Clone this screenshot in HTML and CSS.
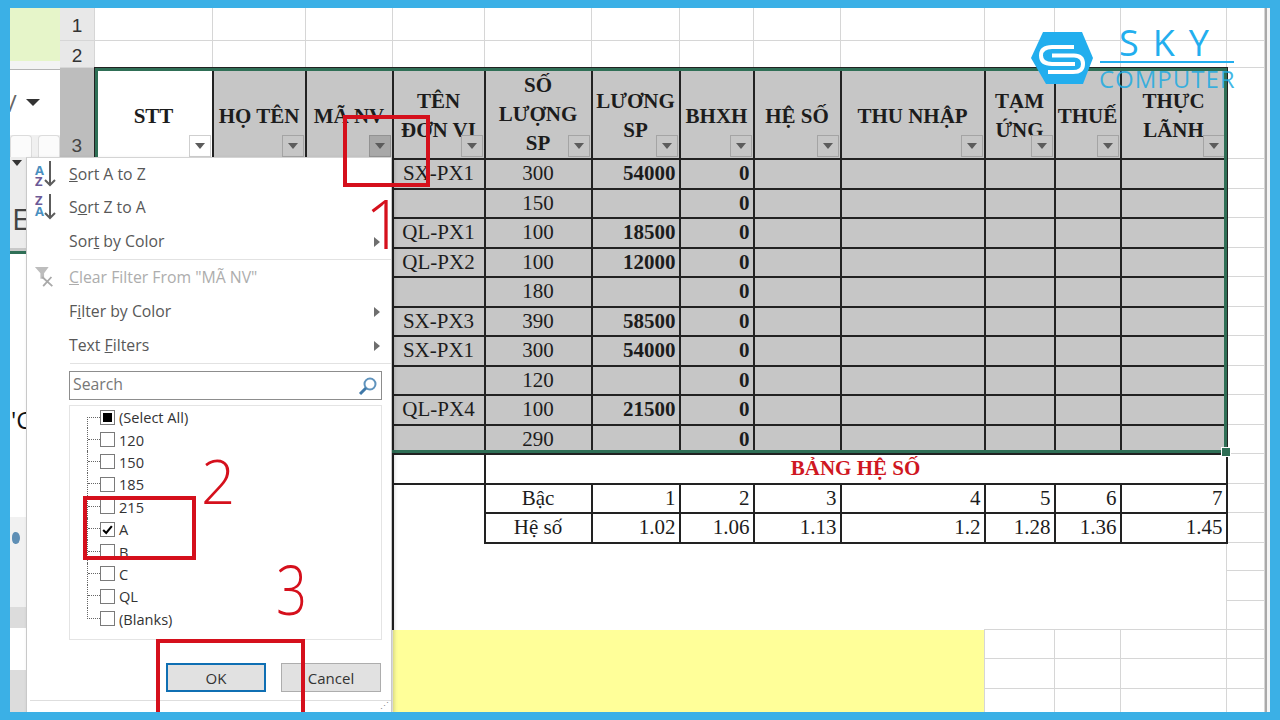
FILE: index.html
```html
<!DOCTYPE html>
<html>
	<head>
		<meta charset="UTF-8"/>
		<title>Lọc dữ liệu trong Excel</title>
		<link rel="stylesheet" href="styles.css">
	</head>
	<body>
		<div class="window">
			<div class="side">
				<div class="side-green"></div>
				<div class="side-gap"></div>
				<div class="side-tool"><span class="slash">/</span><span class="tri"></span></div>
				<div class="side-btns"><span class="side-btn"></span><span class="side-btn"></span></div>
				<div class="side-sub"><span class="tri tri-small"></span><span class="side-e">E</span></div>
				<div class="side-line"></div>
				<div class="side-white"><span class="side-c">'C</span></div>
				<div class="side-light"><span class="side-eye"></span></div>
				<div class="side-gray side-gray-a"></div>
				<div class="side-blank"></div>
				<div class="side-gray side-gray-b"></div>
			</div>

			<div class="sheet">
				<table class="grid">
					<colgroup>
						<col class="w35"><col class="w118"><col class="w93"><col class="w87"><col class="w92"><col class="w107"><col class="w88"><col class="w74"><col class="w87"><col class="w144"><col class="w70"><col class="w66"><col class="w106"><col class="w38">
					</colgroup>
					<tr class="r33"><td class="rowhead">1</td><td></td><td></td><td></td><td></td><td></td><td></td><td></td><td></td><td></td><td></td><td></td><td></td><td></td></tr>
					<tr class="r27"><td class="rowhead">2</td><td></td><td></td><td></td><td></td><td></td><td></td><td></td><td></td><td></td><td></td><td></td><td></td><td></td></tr>
					<tr class="r89">
						<td class="rowhead rowhead-on">3</td>
						<td class="th th-white">STT<span class="fbtn fbtn-white"><i></i></span></td>
						<td class="th">HỌ TÊN<span class="fbtn"><i></i></span></td>
						<td class="th">MÃ NV<span class="fbtn fbtn-on"><i></i></span></td>
						<td class="th">TÊN<br>ĐƠN VỊ<span class="fbtn"><i></i></span></td>
						<td class="th th-tall">SỐ<br>LƯỢNG<br>SP<span class="fbtn"><i></i></span></td>
						<td class="th">LƯƠNG<br>SP<span class="fbtn"><i></i></span></td>
						<td class="th">BHXH<span class="fbtn"><i></i></span></td>
						<td class="th">HỆ SỐ<span class="fbtn"><i></i></span></td>
						<td class="th">THU NHẬP<span class="fbtn"><i></i></span></td>
						<td class="th">TẠM<br>ỨNG<span class="fbtn"><i></i></span></td>
						<td class="th">THUẾ<span class="fbtn"><i></i></span></td>
						<td class="th">THỰC<br>LÃNH<span class="fbtn"><i></i></span></td>
						<td></td>
					</tr>
					<tr class="r30 data"><td class="rowhead"></td><td colspan="3"></td><td>SX-PX1</td><td>300</td><td class="num b">54000</td><td class="num b">0</td><td></td><td></td><td></td><td></td><td></td><td class="out"></td></tr>
					<tr class="r29 data"><td class="rowhead"></td><td colspan="3"></td><td></td><td>150</td><td></td><td class="num b">0</td><td></td><td></td><td></td><td></td><td></td><td class="out"></td></tr>
					<tr class="r30 data"><td class="rowhead"></td><td colspan="3"></td><td>QL-PX1</td><td>100</td><td class="num b">18500</td><td class="num b">0</td><td></td><td></td><td></td><td></td><td></td><td class="out"></td></tr>
					<tr class="r29 data"><td class="rowhead"></td><td colspan="3"></td><td>QL-PX2</td><td>100</td><td class="num b">12000</td><td class="num b">0</td><td></td><td></td><td></td><td></td><td></td><td class="out"></td></tr>
					<tr class="r30 data"><td class="rowhead"></td><td colspan="3"></td><td></td><td>180</td><td></td><td class="num b">0</td><td></td><td></td><td></td><td></td><td></td><td class="out"></td></tr>
					<tr class="r29 data"><td class="rowhead"></td><td colspan="3"></td><td>SX-PX3</td><td>390</td><td class="num b">58500</td><td class="num b">0</td><td></td><td></td><td></td><td></td><td></td><td class="out"></td></tr>
					<tr class="r30 data"><td class="rowhead"></td><td colspan="3"></td><td>SX-PX1</td><td>300</td><td class="num b">54000</td><td class="num b">0</td><td></td><td></td><td></td><td></td><td></td><td class="out"></td></tr>
					<tr class="r29 data"><td class="rowhead"></td><td colspan="3"></td><td></td><td>120</td><td></td><td class="num b">0</td><td></td><td></td><td></td><td></td><td></td><td class="out"></td></tr>
					<tr class="r30 data"><td class="rowhead"></td><td colspan="3"></td><td>QL-PX4</td><td>100</td><td class="num b">21500</td><td class="num b">0</td><td></td><td></td><td></td><td></td><td></td><td class="out"></td></tr>
					<tr class="r29 data"><td class="rowhead"></td><td colspan="3"></td><td></td><td>290</td><td></td><td class="num b">0</td><td></td><td></td><td></td><td></td><td></td><td class="out"></td></tr>
					<tr class="r30 plain"><td class="rowhead"></td><td colspan="3" class="none"></td><td class="black"></td><td colspan="8" class="black title">BẢNG HỆ SỐ</td><td class="out"></td></tr>
					<tr class="r29 plain"><td class="rowhead"></td><td colspan="3" class="none"></td><td class="leftline"></td><td class="black">Bậc</td><td class="black num">1</td><td class="black num">2</td><td class="black num">3</td><td class="black num">4</td><td class="black num">5</td><td class="black num">6</td><td class="black num">7</td><td class="out"></td></tr>
					<tr class="r30 plain"><td class="rowhead"></td><td colspan="3" class="none"></td><td class="leftline"></td><td class="black">Hệ số</td><td class="black num">1.02</td><td class="black num">1.06</td><td class="black num">1.13</td><td class="black num">1.2</td><td class="black num">1.28</td><td class="black num">1.36</td><td class="black num">1.45</td><td class="out"></td></tr>
					<tr class="r28 plain"><td class="rowhead"></td><td colspan="3" class="none"></td><td class="leftline" colspan="9"></td><td class="out"></td></tr>
					<tr class="r30 plain"><td class="rowhead"></td><td colspan="3" class="none"></td><td class="leftline" colspan="9"></td><td class="out"></td></tr>
					<tr class="r29 plain"><td class="rowhead"></td><td colspan="3" class="none"></td><td class="leftline" colspan="9"></td><td class="out"></td></tr>
					<tr class="r29 plain"><td class="rowhead"></td><td colspan="3" class="none"></td><td class="yellow" colspan="6" rowspan="3"></td><td></td><td></td><td></td><td></td></tr>
					<tr class="r30 plain"><td class="rowhead"></td><td colspan="3" class="none"></td><td></td><td></td><td></td><td></td></tr>
					<tr class="r29 plain"><td class="rowhead"></td><td colspan="3" class="none"></td><td></td><td></td><td></td><td></td></tr>
				</table>
			</div>
			<div class="scroll-edge"></div>

			<!-- green selection round the filtered range -->
			<div class="selection"><span class="handle"></span></div>

			<div class="menu">
				<div class="item"><svg class="ico" viewBox="0 0 24 28"><text x="1" y="15" class="az-a">A</text><text x="1" y="26" class="az-z">Z</text><path d="M16 1v24M11 20l5 5 5-5" class="az-arrow"/></svg><span><u>S</u>ort A to Z</span></div>
				<div class="item"><svg class="ico" viewBox="0 0 24 28"><text x="1" y="12" class="az-z">Z</text><text x="1" y="23" class="az-a">A</text><path d="M16 1v24M11 20l5 5 5-5" class="az-arrow"/></svg><span>S<u>o</u>rt Z to A</span></div>
				<div class="item"><span>Sor<u>t</u> by Color</span><i class="arrow"></i></div>
				<div class="sep"></div>
				<div class="item item-off"><svg class="ico" viewBox="0 0 24 24"><path d="M1 1h15l-5 7v6H7V8z" fill="#bdbdbd"/><path d="M9 12l11 10M19 12L10 22" stroke="#a9a9a9" stroke-width="2" fill="none"/></svg><span><u>C</u>lear Filter From "MÃ NV"</span></div>
				<div class="item"><span>F<u>i</u>lter by Color</span><i class="arrow"></i></div>
				<div class="item"><span>Text <u>F</u>ilters</span><i class="arrow"></i></div>
				<div class="sep"></div>
				<div class="search"><span>Search</span><svg class="lens" viewBox="0 0 20 20"><circle cx="12" cy="8" r="5.5" fill="none" stroke="#5f93bd" stroke-width="2"/><path d="M8 12l-6 6" stroke="#3f78a8" stroke-width="3"/></svg></div>
				<ul class="tree">
					<li><span class="twig"></span><span class="box box-mixed"></span>(Select All)</li>
					<li><span class="twig"></span><span class="box"></span>120</li>
					<li><span class="twig"></span><span class="box"></span>150</li>
					<li><span class="twig"></span><span class="box"></span>185</li>
					<li><span class="twig"></span><span class="box"></span>215</li>
					<li><span class="twig"></span><span class="box box-on"><svg viewBox="0 0 15 15"><path d="M2.5 8l3.5 3.5L12.500 3.500" fill="none" stroke="#000" stroke-width="2.4"/></svg></span>A</li>
					<li><span class="twig"></span><span class="box"></span>B</li>
					<li><span class="twig"></span><span class="box"></span>C</li>
					<li><span class="twig"></span><span class="box"></span>QL</li>
					<li><span class="twig"></span><span class="box"></span>(Blanks)</li>
				</ul>
				<div class="buttons">
					<span class="btn btn-ok">OK</span>
					<span class="btn">Cancel</span>
				</div>
				<div class="menu-foot"><span class="grip">⋰</span></div>
			</div>

			<!-- red marks drawn over the screenshot -->
			<div class="mark mark-1"></div>
			<div class="mark mark-2"></div>
			<div class="mark mark-3"></div>
			<span class="digit digit-1">1</span>
			<span class="digit digit-2">2</span>
			<span class="digit digit-3">3</span>

			<div class="logo">
				<svg class="logo-hex" viewBox="0 0 62 54">
					<path d="M12 0H51L62 26 52 52H15L0 26z" fill="#22aeee"/>
					<path d="M43 15H21Q10 15 10 23.500Q10 32 21 32H44" fill="none" stroke="#fff" stroke-width="4"/>
					<path d="M21 23.500H43Q52 23.500 52 32Q52 40 42 40H17" fill="none" stroke="#fff" stroke-width="4"/>
				</svg>
				<div class="logo-text">
					<div class="logo-sky">SKY</div>
					<div class="logo-rule"></div>
					<div class="logo-computer">COMPUTER</div>
				</div>
			</div>
		</div>
	</body>
</html>
```

FILE: styles.css
```css
html, body {
	margin: 0;
	padding: 0;
	height: 100%;
	background: #3bb0e6;
	overflow: hidden;
}

body {
	padding: 8px 10px;
	box-sizing: border-box;
}

.window {
	position: relative;
	display: flex;
	width: 1260px;
	height: 704px;
	background: white;
	overflow: hidden;
	font-family: "Liberation Serif", serif;
	color: #1c1c1c;
}

/* left strip: what is left of the ribbon and the panel behind the menu */
.side {
	width: 50px;
	flex: none;
	display: flex;
	flex-direction: column;
	background: white;
	font-family: "Open Sans", sans-serif;
}

.side-green {
	height: 53px;
	background: #e6f5c9;
}

.side-gap {
	height: 8px;
	background: #f3f3f3;
	border-bottom: 1px solid #b4b4b4;
}

.side-tool {
	height: 65px;
	display: flex;
	align-items: center;
	gap: 9px;
}

.slash {
	font-size: 24px;
	color: #666;
	margin-left: -2px;
}

.tri {
	width: 0;
	height: 0;
	border-left: 7px solid transparent;
	border-right: 7px solid transparent;
	border-top: 7px solid #333;
}

.side-btns {
	height: 22px;
	display: flex;
	gap: 6px;
	background: #f0f0f0;
}

.side-btn {
	flex: 1;
	background: #fbfbfb;
	border: 1px solid #dcdcdc;
	border-bottom: none;
	border-radius: 4px 4px 0 0;
}

.side-sub {
	height: 91px;
	background: #ececec;
	display: flex;
	flex-direction: column;
	align-items: flex-start;
}

.tri-small {
	margin: 3px 0 0 2px;
	border-left-width: 5px;
	border-right-width: 5px;
	border-top-width: 6px;
}

.side-e {
	font-size: 30px;
	line-height: 30px;
	color: #444;
	margin: 38px 0 0 2px;
}

.side-line {
	height: 7px;
	background: linear-gradient(#c9c9c9 0 3px, #2f6f56 3px 6px, white 6px);
}

.side-white {
	height: 262px;
}

.side-c {
	display: block;
	margin: 150px 0 0 1px;
	font-size: 24px;
	line-height: 30px;
	color: #111;
}

.side-light {
	height: 90px;
	background: #f1f1f1;
}

.side-eye {
	display: block;
	width: 8px;
	height: 12px;
	margin: 15px 0 0 2px;
	background: #5f8fb5;
	border-radius: 50% 60% 60% 50%;
}

.side-gray {
	background: #dcdcdc;
}

.side-gray-a {
	height: 21px;
}

.side-blank {
	height: 42px;
}

.side-gray-b {
	height: 42px;
}

/* the worksheet */
.sheet {
	width: 1205px;
	flex: none;
	overflow: hidden;
}

.scroll-edge {
	flex: 1;
	border-left: 2px solid #a9a9a9;
	background: #f5f5f5;
}

.grid {
	border-collapse: collapse;
	table-layout: fixed;
	width: 1205px;
	margin: -1px 0 0 -1px;
	font-size: 21px;
}

.grid td {
	border: 1px solid #d6d6d6;
	padding: 0 3px;
	text-align: center;
	white-space: nowrap;
	overflow: hidden;
}

.w35 { width: 35px; }
.w118 { width: 118px; }
.w93 { width: 93px; }
.w87 { width: 87px; }
.w92 { width: 92px; }
.w107 { width: 107px; }
.w88 { width: 88px; }
.w74 { width: 74px; }
.w144 { width: 144px; }
.w70 { width: 70px; }
.w66 { width: 66px; }
.w106 { width: 106px; }
.w38 { width: 38px; }

.r33 { height: 33px; }
.r27 { height: 27px; }
.r89 { height: 89px; }
.r30 { height: 30px; }
.r29 { height: 29px; }
.r28 { height: 28px; }

.grid td.rowhead {
	background: #e8e8e8;
	font-family: "Liberation Sans", sans-serif;
	font-size: 19px;
	color: #333;
	vertical-align: middle;
	padding: 4px 0 0 0;
}

.grid td.rowhead-on {
	background: #bdbdbd;
	vertical-align: bottom;
	color: #444;
	padding: 0 0 1px 0;
}

.grid td.th {
	position: relative;
	overflow: visible;
	background: #c6c6c6;
	border: 2px solid #222;
	font-weight: bold;
	line-height: 29px;
	padding: 6px 0 0 0;
}

.grid td.th-tall {
	padding-top: 2px;
}

.grid td.th-white {
	background: white;
}

.fbtn {
	position: absolute;
	right: 1px;
	bottom: 1px;
	width: 22px;
	height: 22px;
	box-sizing: border-box;
	display: flex;
	align-items: center;
	justify-content: center;
	background: #c6c6c6;
	border: 1px solid #a4a4a4;
}

.fbtn i {
	width: 0;
	height: 0;
	border-left: 5px solid transparent;
	border-right: 5px solid transparent;
	border-top: 6px solid #5c5c5c;
}

.fbtn-white {
	background: white;
	border-color: #cfcfcf;
}

.fbtn-on {
	background: #a8a8a8;
	border-color: #929292;
}

.grid .data td {
	background: #c6c6c6;
	border: 2px solid #222;
}

.grid .data td.rowhead {
	background: #e8e8e8;
	border: 1px solid #d6d6d6;
}

.grid .data td.out,
.grid .plain td.out {
	background: white;
	border: 1px solid #d6d6d6;
}

.grid td.num {
	text-align: right;
}

.grid td.b {
	font-weight: bold;
}

.grid td.black {
	border: 2px solid #222;
}

.grid td.title {
	color: #cf1722;
	font-weight: bold;
}

.grid td.none {
	border: none;
}

.grid td.leftline {
	border: none;
	border-left: 2px solid #222;
}

.grid td.yellow {
	background: #ffff99;
	border: none;
}

.selection {
	position: absolute;
	left: 85px;
	top: 60px;
	width: 1132px;
	height: 385px;
	box-sizing: border-box;
	border: 3px solid #2f6f56;
}

.handle {
	position: absolute;
	right: -7px;
	bottom: -7px;
	width: 8px;
	height: 8px;
	background: #2f6f56;
	border: 1px solid white;
}

/* filter drop down */
.menu {
	position: absolute;
	left: 16px;
	top: 149px;
	width: 366px;
	height: 555px;
	box-sizing: border-box;
	background: white;
	border-left: 1px solid #c9c9c9;
	border-top: 1px solid #d4d4d4;
	border-right: 1px solid #c9c9c9;
	box-shadow: 2px 2px 4px rgba(0,0,0,0.2);
	font-family: "Open Sans", sans-serif;
	font-size: 15.8px;
	color: #585858;
	display: flex;
	flex-direction: column;
}

.item {
	position: relative;
	height: 34px;
	box-sizing: border-box;
	padding: 0 0 2px 42px;
	flex: none;
	display: flex;
	align-items: center;
}

.item:first-child {
	height: 33px;
}

.item-off {
	color: #adadad;
}

.ico {
	position: absolute;
	left: 7px;
	top: 2px;
	width: 24px;
	height: 28px;
	overflow: visible;
}

.item-off .ico {
	top: 5px;
	width: 22px;
	height: 22px;
}

.az-a {
	font: bold 13px "Open Sans", sans-serif;
	fill: #4a8fc0;
}

.az-z {
	font: bold 13px "Open Sans", sans-serif;
	fill: #6c5a97;
}

.az-arrow {
	fill: none;
	stroke: #5c5c5c;
	stroke-width: 2;
}

.arrow {
	position: absolute;
	right: 11px;
	top: 12px;
	border-top: 5px solid transparent;
	border-bottom: 5px solid transparent;
	border-left: 6px solid #6e6e6e;
}

.sep {
	height: 1px;
	margin: 0 0 1px 43px;
	background: #e2e2e2;
	flex: none;
}

.search {
	flex: none;
	margin: 6px 9px 0 42px;
	height: 29px;
	box-sizing: border-box;
	border: 1px solid #8d8d8d;
	display: flex;
	align-items: center;
	justify-content: space-between;
	padding: 0 3px 3px 3px;
	color: #777;
}

.lens {
	width: 20px;
	height: 20px;
	margin-top: 3px;
}

.tree {
	flex: none;
	list-style: none;
	margin: 5px 9px 0 42px;
	padding: 0 0 0 17px;
	height: 235px;
	box-sizing: border-box;
	border: 1px solid #e4e4e4;
	font-size: 14.6px;
	color: #333;
}

.tree li {
	height: 22.4px;
	display: flex;
	align-items: center;
	border-left: 1px dotted #666;
}

.tree li:first-child,
.tree li:last-child {
	border-left-color: transparent;
}

.twig {
	width: 12px;
	height: 50%;
	align-self: flex-start;
	border-bottom: 1px dotted #666;
	box-sizing: border-box;
}

.tree li:last-child .twig {
	border-left: 1px dotted #666;
	margin-left: -1px;
	width: 13px;
}

.tree li:first-child .twig {
	align-self: flex-end;
	border-bottom: none;
	border-top: 1px dotted #666;
	border-left: 1px dotted #666;
	margin-left: -1px;
	width: 13px;
}

.box {
	width: 15px;
	height: 15px;
	box-sizing: border-box;
	border: 1px solid #7a7a7a;
	margin-right: 4px;
	flex: none;
	background: white;
}

.box svg {
	display: block;
	width: 13px;
	height: 13px;
}

.box-mixed {
	padding: 2px;
	background: black content-box;
}

.buttons {
	flex: none;
	display: flex;
	justify-content: flex-end;
	gap: 15px;
	margin: 23px 10px 0 0;
	font-size: 15px;
}

.btn {
	width: 100px;
	height: 29px;
	box-sizing: border-box;
	background: #e1e1e1;
	border: 1px solid #adadad;
	display: flex;
	align-items: center;
	justify-content: center;
	color: #333;
}

.btn-ok {
	border: 2px solid #0f6fb3;
}

.menu-foot {
	flex: none;
	margin: 8px 0 0 3px;
	border-top: 1px solid #dedede;
	text-align: right;
	font-size: 9px;
	line-height: 10px;
	color: #888;
}

.grip {
	padding-right: 2px;
}

/* red annotations */
.mark {
	position: absolute;
	box-sizing: border-box;
	border: 4px solid #d5101c;
}

.mark-1 {
	left: 333px;
	top: 107px;
	width: 87px;
	height: 72px;
}

.mark-2 {
	left: 73px;
	top: 488px;
	width: 113px;
	height: 64px;
}

.mark-3 {
	left: 146px;
	top: 631px;
	width: 149px;
	height: 73px;
	border-bottom: none;
}

.digit {
	position: absolute;
	font-family: "Open Sans", sans-serif;
	font-weight: 300;
	font-size: 68px;
	line-height: 68px;
	color: #d5101c;
}

.digit-1 {
	left: 355px;
	top: 181px;
}

.digit-2 {
	left: 191px;
	top: 443px;
	font-size: 60px;
	line-height: 60px;
}

.digit-3 {
	left: 262px;
	top: 547px;
	transform: scaleX(0.8);
}

/* logo */
.logo {
	position: absolute;
	left: 1021px;
	top: 22px;
	display: flex;
	gap: 6px;
}

.logo-hex {
	width: 62px;
	height: 54px;
	margin-top: 2px;
}

.logo-text {
	width: 140px;
	font-family: "Open Sans", sans-serif;
	color: #22aeee;
}

.logo-sky {
	font-size: 36px;
	font-weight: 500;
	line-height: 31px;
	letter-spacing: 14px;
	padding-left: 20px;
	margin: -3px 0 3px 0;
}

.logo-rule {
	height: 2px;
	background: #22aeee;
	width: 134px;
	margin-left: 1px;
}

.logo-computer {
	font-size: 24px;
	line-height: 28px;
	margin-top: 2px;
	letter-spacing: 1px;
	color: rgba(30,170,225,0.85);
}
```
